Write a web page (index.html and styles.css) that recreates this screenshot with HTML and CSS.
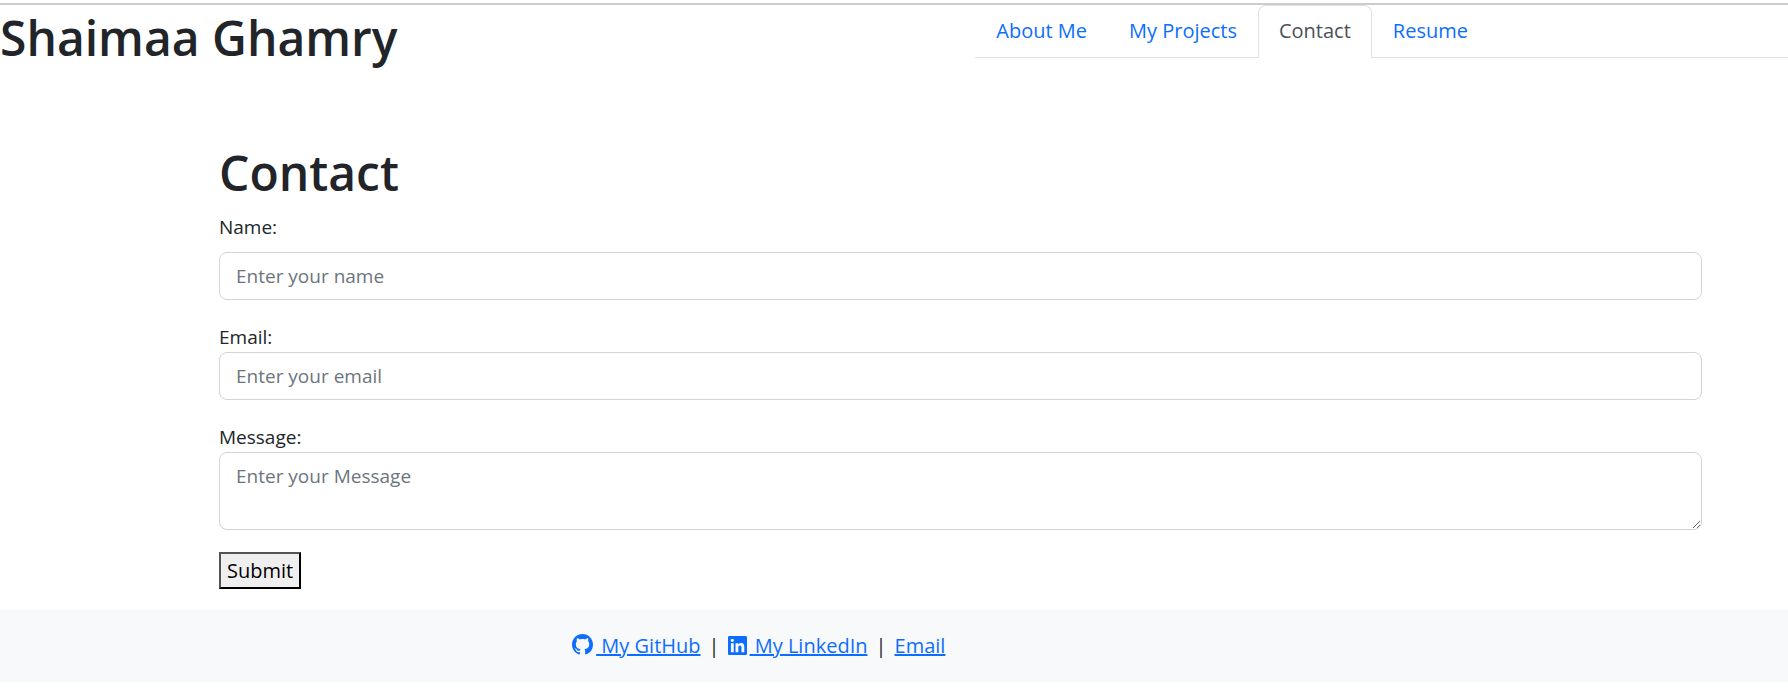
FILE: index.html
```html
<!DOCTYPE html>
<html lang="en">
<head>
<meta charset="utf-8">
<meta name="viewport" content="width=device-width, initial-scale=1">
<title>Shaimaa Ghamry</title>
<link rel="stylesheet" href="styles.css">
</head>
<body>
<header class="site-header">
  <h1 class="title">Shaimaa Ghamry</h1>
  <nav class="tabs">
    <a class="tab" href="#about">About Me</a>
    <a class="tab" href="#projects">My Projects</a>
    <a class="tab tab-active" href="#contact" aria-current="page">Contact</a>
    <a class="tab" href="#resume">Resume</a>
  </nav>
</header>
<main class="contact" id="contact">
  <h1 class="title">Contact</h1>
  <form class="form">
    <div class="field field-spaced">
      <label for="name">Name:</label>
      <input class="control" id="name" type="text" placeholder="Enter your name">
    </div>
    <div class="field">
      <label for="email">Email:</label>
      <input class="control" id="email" type="email" placeholder="Enter your email">
    </div>
    <div class="field">
      <label for="message">Message:</label>
      <textarea class="control message" id="message" placeholder="Enter your Message"></textarea>
    </div>
    <button class="submit" type="submit">Submit</button>
  </form>
</main>
<footer class="site-footer">
  <a class="link" href="#github"><svg class="icon" viewBox="0 0 16 16" aria-hidden="true"><path d="M8 0C3.58 0 0 3.58 0 8c0 3.54 2.29 6.53 5.47 7.59.4.07.55-.17.55-.38 0-.19-.01-.82-.01-1.49-2.01.37-2.53-.49-2.69-.94-.09-.23-.48-.94-.82-1.13-.28-.15-.68-.52-.01-.53.63-.01 1.08.58 1.23.82.72 1.21 1.87.87 2.33.66.07-.52.28-.87.51-1.07-1.78-.2-3.64-.89-3.64-3.95 0-.87.31-1.59.82-2.15-.08-.2-.36-1.02.08-2.12 0 0 .67-.21 2.2.82.64-.18 1.32-.27 2-.27s1.36.09 2 .27c1.53-1.04 2.2-.82 2.2-.82.44 1.1.16 1.92.08 2.12.51.56.82 1.27.82 2.15 0 3.07-1.87 3.75-3.65 3.95.29.25.54.73.54 1.48 0 1.07-.01 1.93-.01 2.2 0 .21.15.46.55.38A8.01 8.01 0 0 0 16 8c0-4.42-3.58-8-8-8z"/></svg> My GitHub</a>
  <span>|</span>
  <a class="link" href="#linkedin"><svg class="icon icon-square" viewBox="0 0 448 448" aria-hidden="true"><path d="M416 0H31.900C14.300 0 0 14.500 0 32.300v383.400C0 433.500 14.300 448 31.900 448H416c17.600 0 32-14.500 32-32.300V32.300C448 14.500 433.600 0 416 0zM135.400 384H69V170.200h66.500V384zM102.200 141c-21.300 0-38.500-17.300-38.500-38.500S80.900 64 102.200 64c21.200 0 38.500 17.300 38.500 38.500 0 21.300-17.200 38.500-38.500 38.500zM384.300 384h-66.400V280c0-24.800-.5-56.700-34.500-56.700-34.600 0-39.900 27-39.900 54.900V384h-66.400V170.200h63.700v29.200h.9c8.900-16.800 30.600-34.500 62.900-34.500 67.200 0 79.700 44.300 79.700 101.900V384z"/></svg> My LinkedIn</a>
  <span>|</span>
  <a class="link" href="#email">Email</a>
</footer>
</body>
</html>
```
FILE: styles.css
```css
* { box-sizing: border-box; }
body {
  margin: 0;
  padding-top: 3px;
  background: #fff;
  color: #212529;
  font: 19px/30px "Segoe UI", "Open Sans", sans-serif;
}
.title {
  margin: 0;
  font-size: 48px;
  line-height: 60px;
  font-weight: 600;
}
.site-header {
  display: flex;
  align-items: flex-start;
  border-top: 2px solid #ccc;
}
.site-header .title {
  flex: 6 1 0;
  padding-top: 3px;
}
.tabs {
  flex: 5 1 0;
  display: flex;
  border-bottom: 1px solid #dee2e6;
  font-size: 20px;
}
.tab {
  padding: 10px 20px 11px;
  margin-bottom: -1px;
  border: 1px solid transparent;
  border-top-left-radius: 8px;
  border-top-right-radius: 8px;
  color: #0d6efd;
  text-decoration: none;
  white-space: nowrap;
}
.tab-active {
  color: #495057;
  background: #fff;
  border-color: #dee2e6 #dee2e6 #fff;
}
.contact { padding: 75px 86px 21px 219px; }
.form {
  display: flex;
  flex-direction: column;
  align-items: flex-start;
  gap: 22px;
  padding-top: 9px;
}
.field {
  display: flex;
  flex-direction: column;
  width: 100%;
}
.field-spaced { gap: 10px; }
.control {
  width: 100%;
  height: 48px;
  padding: 8px 16px;
  border: 1px solid #ced4da;
  border-radius: 8px;
  background: #fff;
  color: #212529;
  font: inherit;
}
.control::placeholder { color: #6c757d; opacity: 1; }
.message { height: 78px; resize: vertical; }
.submit {
  padding: 1px 6px;
  border: 2px outset #000;
  background: #efefef;
  color: #000;
  font: inherit;
  font-size: 20px;
  line-height: 31px;
}
.site-footer {
  display: flex;
  gap: 8px;
  padding: 21px 32%;
  background: #f8f9fb;
  font-size: 20px;
  white-space: nowrap;
}
.link {
  color: #0d6efd;
  text-decoration-thickness: 2px;
}
.icon {
  width: 21px;
  height: 21px;
  margin-right: 3px;
  fill: currentColor;
  vertical-align: -2px;
}
.icon-square {
  width: 19px;
  height: 19px;
}
```
